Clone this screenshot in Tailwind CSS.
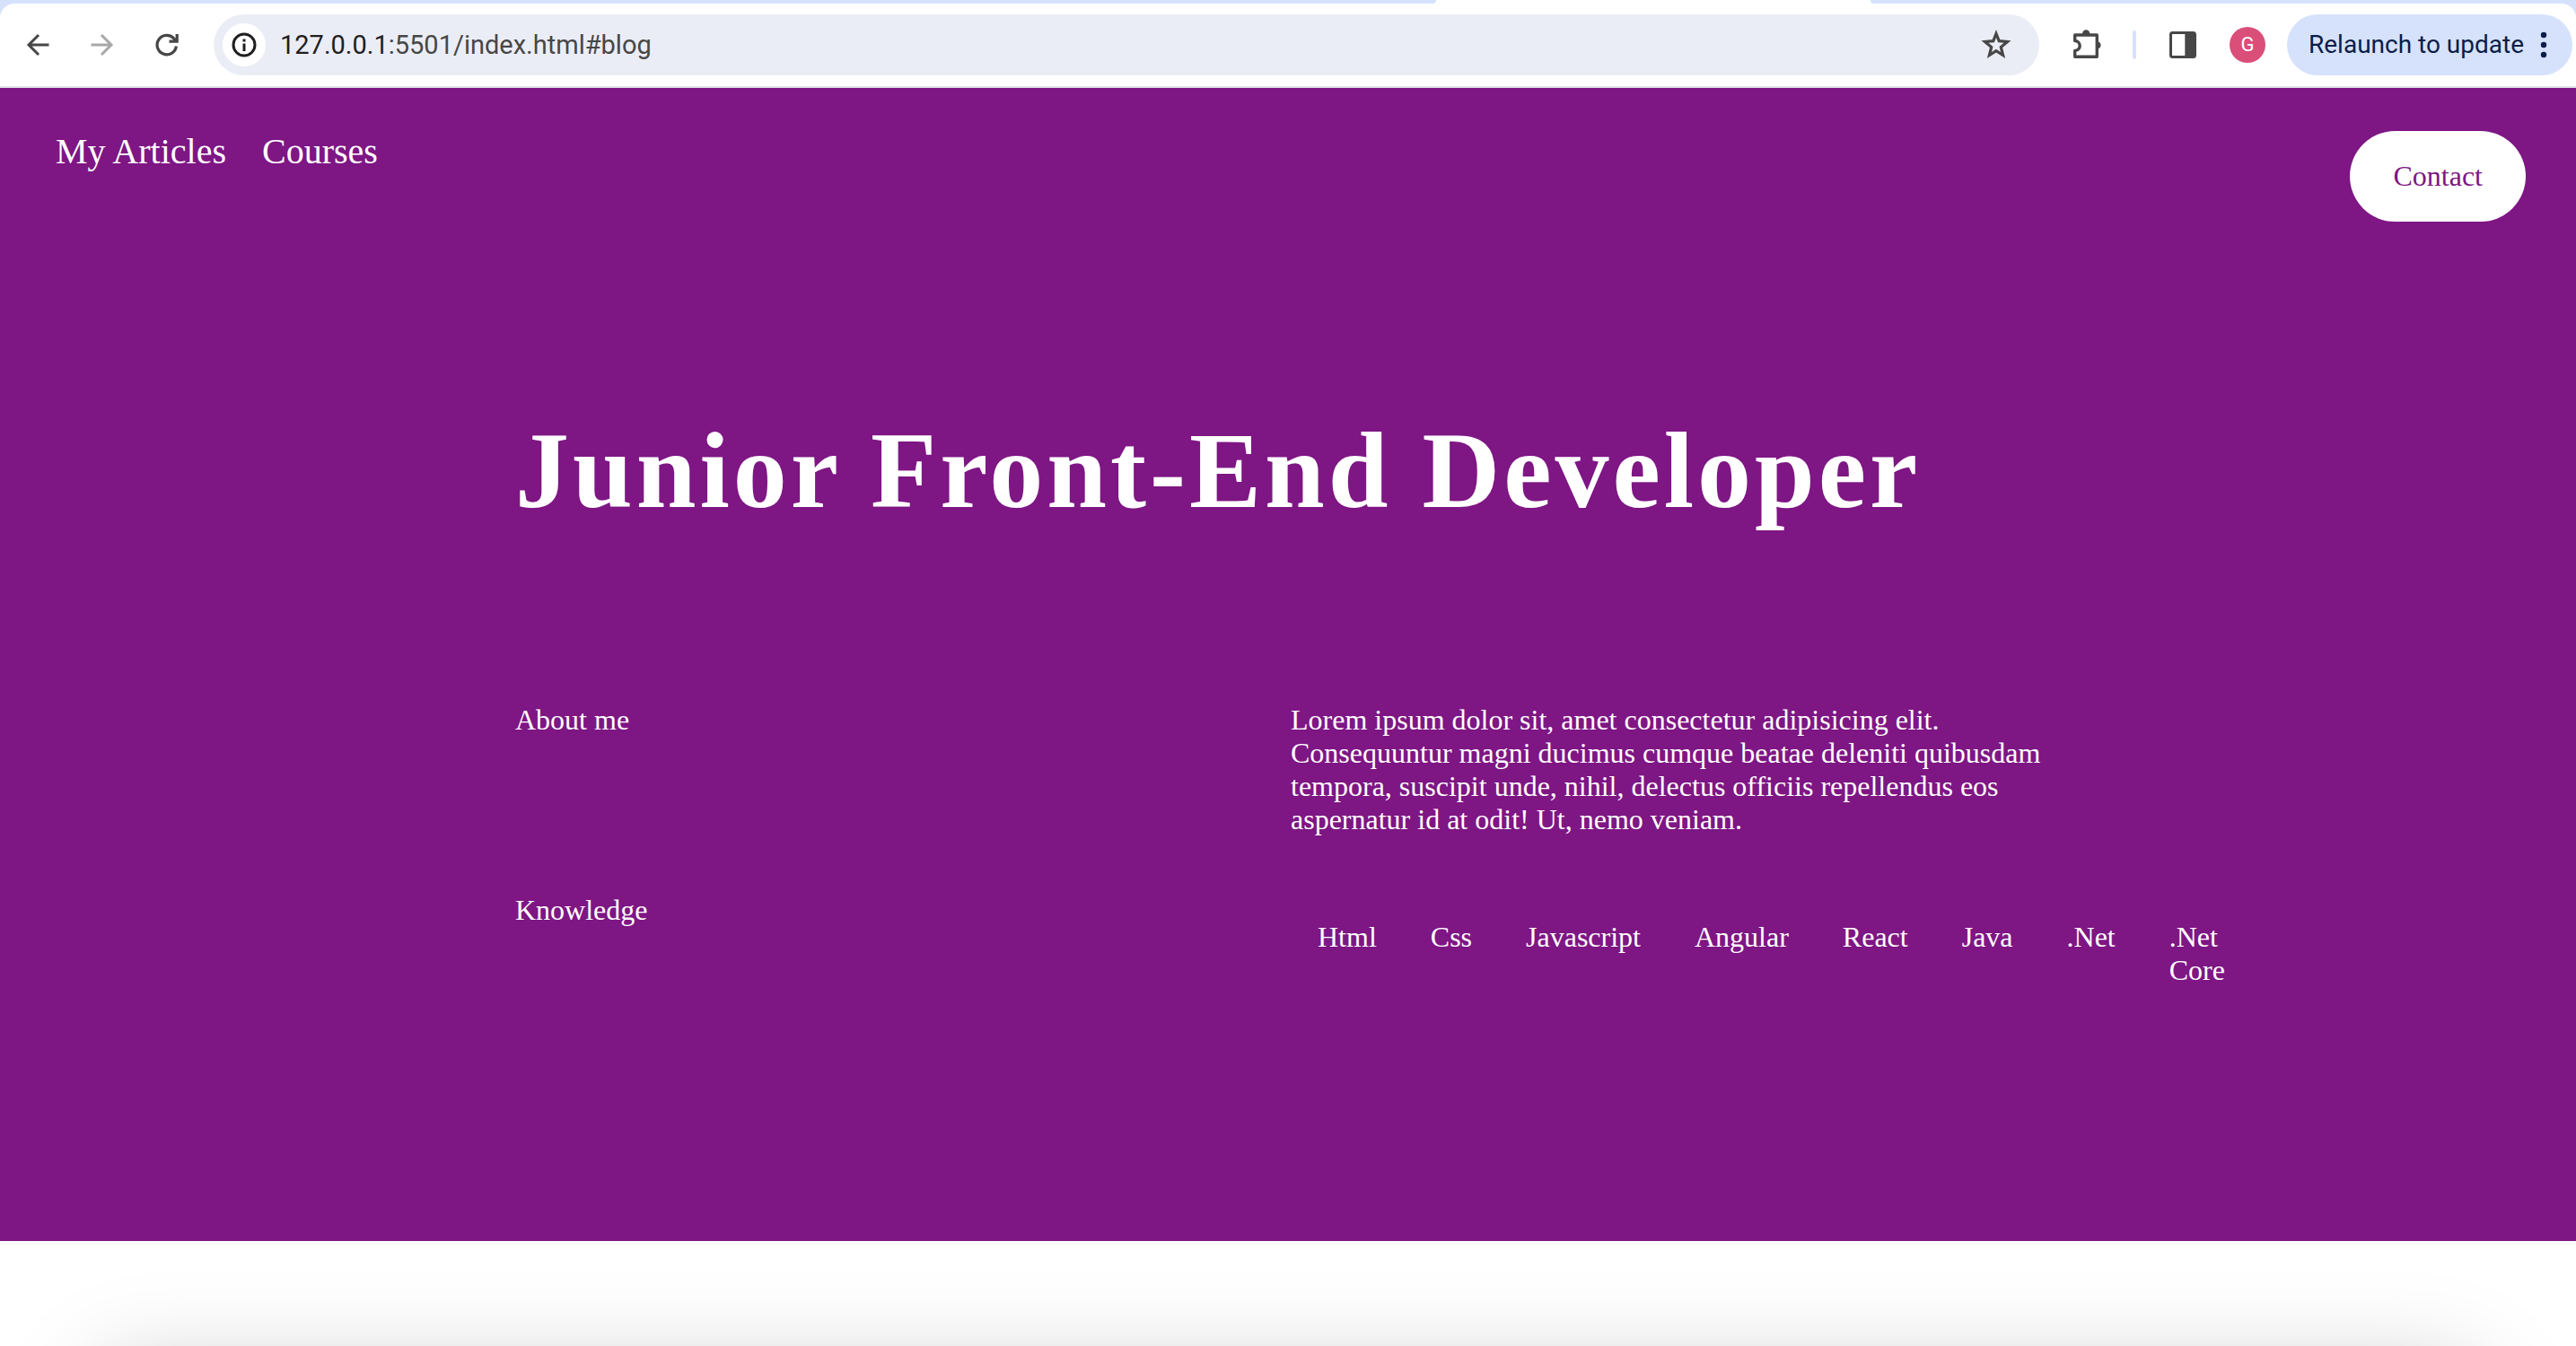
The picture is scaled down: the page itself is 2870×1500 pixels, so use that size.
<!DOCTYPE html>
<html lang="en">
<head>
<meta charset="utf-8">
<title>Junior Front-End Developer</title>
<script src="https://cdn.jsdelivr.net/npm/@tailwindcss/browser@4"></script>
</head>
<body class="bg-white">
<div class="flex h-screen flex-col overflow-hidden">
  <header class="shrink-0 bg-white font-['Roboto',sans-serif]">
    <div class="flex h-1 bg-white">
      <div class="w-[1600px] rounded-br-[16px] bg-[#d6e2fb]"></div>
      <div class="w-[484px]"></div>
      <div class="grow rounded-bl-[16px] bg-[#d6e2fb]"></div>
    </div>
    <div class="bg-[#d6e2fb]">
      <div class="flex h-[94px] items-center rounded-t-[16px] border-b-2 border-[#dfe0e3] bg-white pr-1 pl-6 text-[#474747]">
        <button aria-label="Back" class="mr-9 size-9"><svg viewBox="0 0 36 36" class="size-9" fill="none" stroke="currentColor" stroke-width="3"><path d="M30.500 18H8M19 7L8 18L19 29"/></svg></button>
        <button aria-label="Forward" class="mr-9 size-9 text-[#a8a8a8]"><svg viewBox="0 0 36 36" class="size-9" fill="none" stroke="currentColor" stroke-width="3"><path d="M5.500 18H28M17 7L28 18L17 29"/></svg></button>
        <button aria-label="Reload" class="mr-[34px] size-9"><svg viewBox="0 0 36 36" class="size-9" fill="none" stroke="currentColor" stroke-width="3.200"><path d="M28.400 19.500A10.700 10.700 0 1 1 25.800 11L28 13.500M29.200 6V14.200H20.500"/></svg></button>
        <div class="flex h-[68px] grow items-center rounded-full bg-[#ebedf6] pr-[31px] pl-2.5">
          <button aria-label="Site information" class="flex size-12 items-center justify-center rounded-full bg-white text-[#1f1f1f]"><svg viewBox="0 0 28 28" class="size-7" fill="none" stroke="currentColor" stroke-width="3"><circle cx="14" cy="14" r="12"/><path d="M14 12.500V21M14 7.500V10.500"/></svg></button>
          <a href="#blog" class="ml-4 grow text-[29px] leading-8"><span class="text-[#1f1f1f]">127.0.0.1</span>:5501/index.html#blog</a>
          <button aria-label="Bookmark"><svg viewBox="0 0 34 34" class="size-[34px]" fill="none" stroke="currentColor" stroke-width="3.200"><path d="M17 4.500L20.200 12.700L29.500 13.500L22.300 19.500L24.600 28.500L17 23.700L9.400 28.500L11.700 19.500L4.500 13.500L13.800 12.700Z"/></svg></button>
        </div>
        <button aria-label="Extensions" class="ml-9"><svg viewBox="0 0 36 36" class="size-9" fill="none" stroke="currentColor" stroke-width="3.400" stroke-linejoin="round"><path d="M3.700 7H28.300V31.300H3.700V24.500A5.500 5.500 0 0 0 3.700 13.500Z"/><path d="M12 6A4.200 4.800 0 0 1 20.400 6ZM29.500 14.200A4.800 4.400 0 0 1 29.500 22.400Z" fill="currentColor" stroke="none"/></svg></button>
        <div class="ml-8 h-8 w-1 rounded-full bg-[#d6e2fb]"></div>
        <button aria-label="Side panel" class="ml-9"><svg viewBox="0 0 32 32" class="size-8"><rect x="2.500" y="2.500" width="27" height="27" rx="2" fill="none" stroke="currentColor" stroke-width="3"/><path d="M18.300 2H29V30H18.300Z" fill="currentColor"/></svg></button>
        <button aria-label="Profile" class="ml-9 size-10 rounded-full bg-[#da4f7a] text-[22px] leading-10 text-white">G</button>
        <button class="ml-6 flex h-[68px] items-center rounded-full bg-[#d6e2fb] pr-7 pl-6 text-[28px] leading-8 text-[#0b1d49]"><span class="w-[238px] text-left whitespace-nowrap">Relaunch to update</span><svg viewBox="0 0 8 32" class="ml-5 h-8 w-2" fill="currentColor"><circle cx="4" cy="5" r="3.200"/><circle cx="4" cy="16" r="3.200"/><circle cx="4" cy="27" r="3.200"/></svg></button>
      </div>
    </div>
  </header>

  <main class="font-['Liberation_Serif',serif] text-[32px] leading-[37px] text-white">
    <section class="bg-[#7e1684] pb-[253px]">
      <nav class="flex items-start justify-between pt-12 pr-14 pl-[62px]">
        <div class="flex gap-10 text-[40px] leading-[46px]">
          <a href="#articles">My Articles</a>
          <a href="#courses">Courses</a>
        </div>
        <button class="rounded-full bg-white px-12 py-8 text-[#7e1684]">Contact</button>
      </nav>
      <div class="ml-[20%]">
        <h1 class="mt-[206px] text-[120px] leading-[144px] font-bold tracking-[4px]">Junior Front-End Developer</h1>
        <div class="mt-[187px] grid w-3/4 grid-cols-2 gap-x-1.5 gap-y-16">
          <h2>About me</h2>
          <p>Lorem ipsum dolor sit, amet consectetur adipisicing elit. Consequuntur magni ducimus cumque beatae deleniti quibusdam tempora, suscipit unde, nihil, delectus officiis repellendus eos aspernatur id at odit! Ut, nemo veniam.</p>
          <h2>Knowledge</h2>
          <ul class="flex">
            <li class="p-[30px]">Html</li>
            <li class="p-[30px]">Css</li>
            <li class="p-[30px]">Javascript</li>
            <li class="p-[30px]">Angular</li>
            <li class="p-[30px]">React</li>
            <li class="p-[30px]">Java</li>
            <li class="p-[30px]">.Net</li>
            <li class="p-[30px]">.Net Core</li>
          </ul>
        </div>
      </div>
    </section>
    <section id="blog" class="mx-[4%] mt-[150px] h-96 bg-white shadow-[0_0_100px_rgba(0,0,0,0.25)]"></section>
  </main>
</div>
</body>
</html>
